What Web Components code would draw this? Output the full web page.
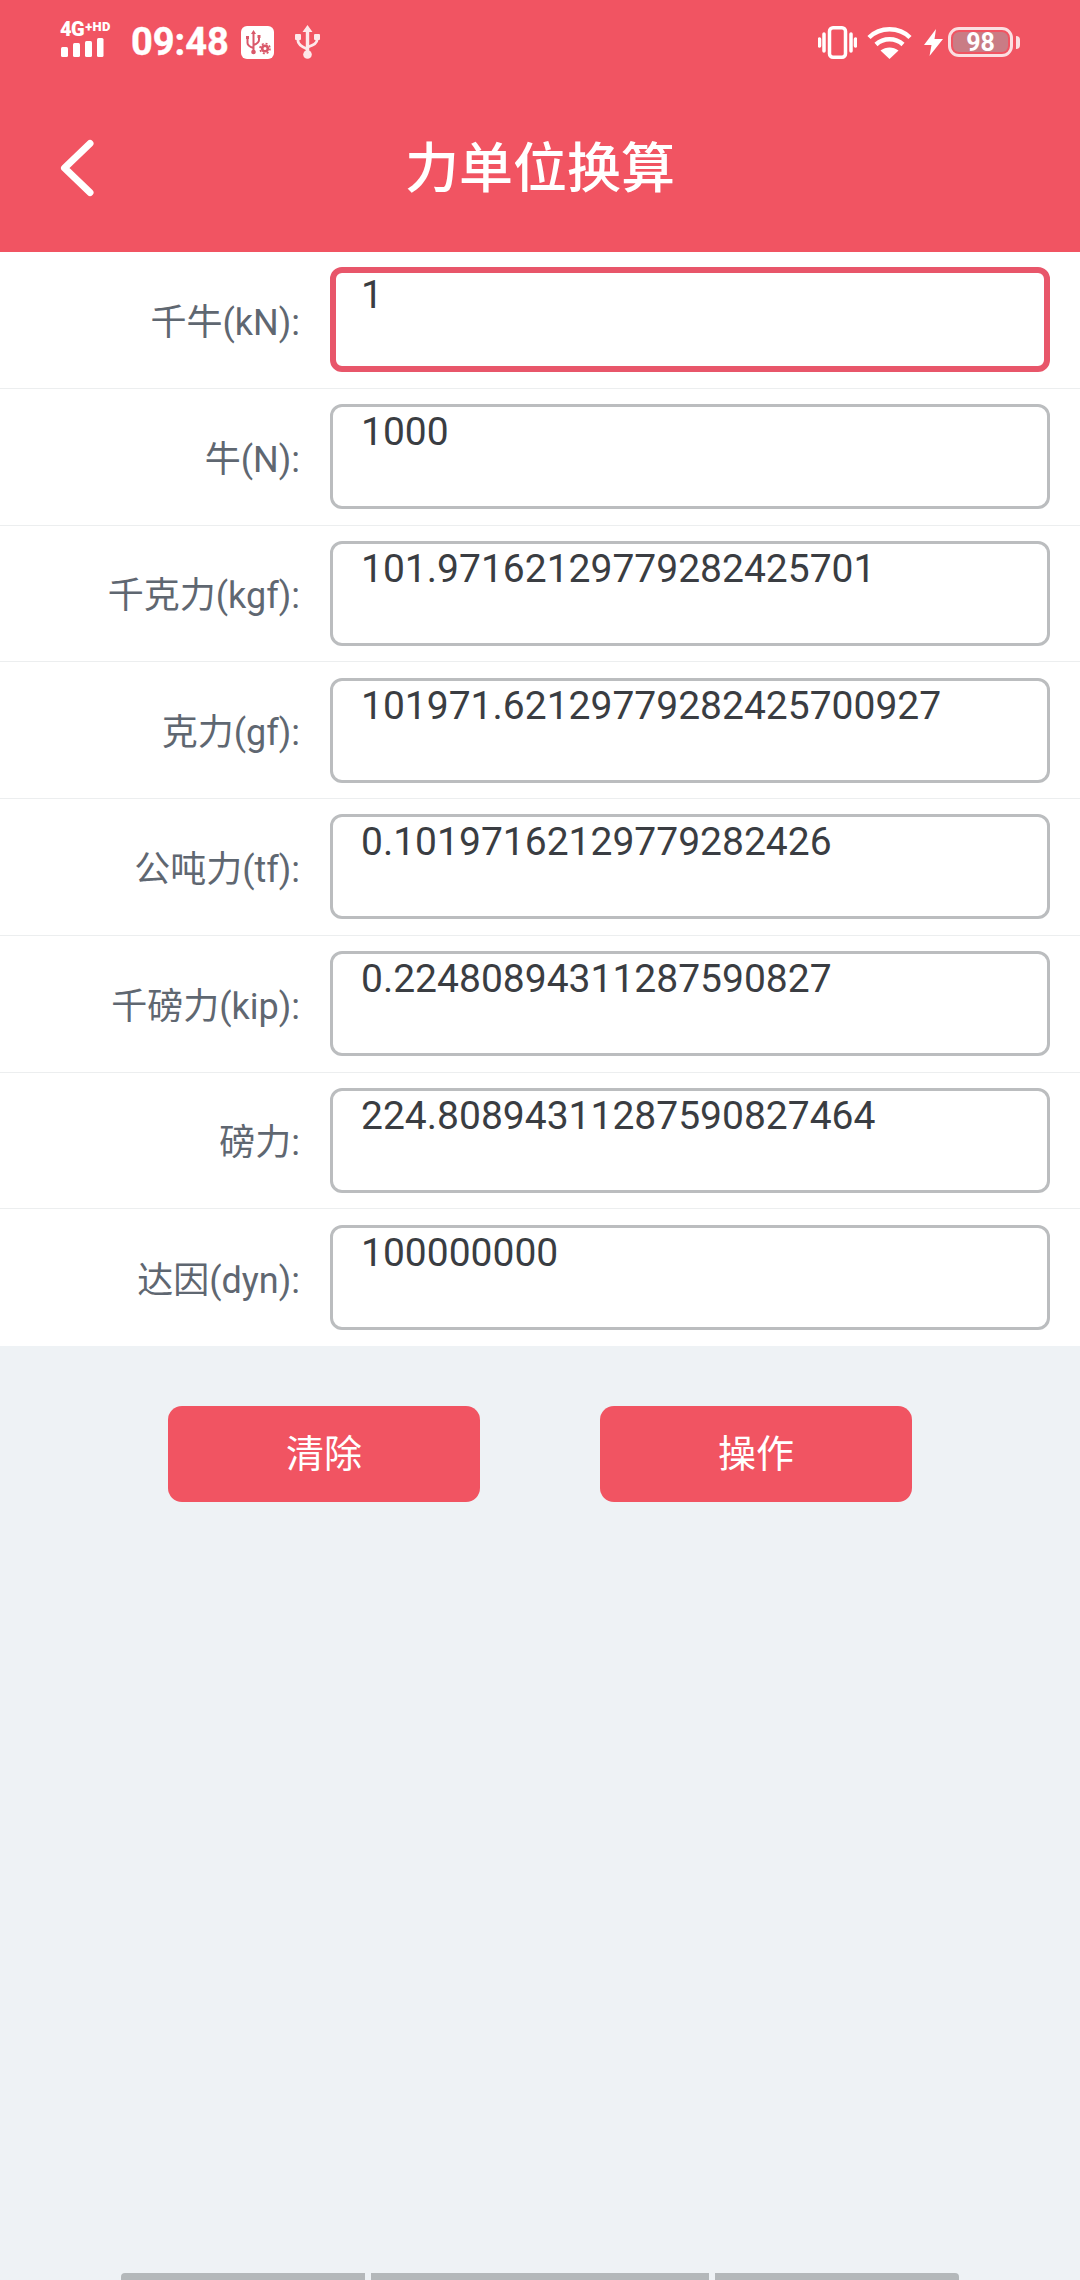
<!DOCTYPE html>
<html lang="zh">
<head>
<meta charset="utf-8">
<title>力单位换算</title>
<style>
    html, body { margin: 0; padding: 0; height: 2280px; overflow: hidden; }
    body { font-family: Roboto, "Noto Sans CJK SC", sans-serif; background: #eef2f5; }
</style>
</head>
<body>
<force-page>
    <status-bar></status-bar>
    <title-bar>力单位换算</title-bar>
    <form-list>
        <unit-row label="千牛(kN):" focused>1</unit-row>
        <unit-row label="牛(N):">1000</unit-row>
        <unit-row label="千克力(kgf):">101.97162129779282425701</unit-row>
        <unit-row label="克力(gf):">101971.62129779282425700927</unit-row>
        <unit-row label="公吨力(tf):">0.10197162129779282426</unit-row>
        <unit-row label="千磅力(kip):">0.22480894311287590827</unit-row>
        <unit-row label="磅力:">224.80894311287590827464</unit-row>
        <unit-row label="达因(dyn):">100000000</unit-row>
    </form-list>
    <action-bar>
        <action-button>清除</action-button>
        <action-button>操作</action-button>
    </action-bar>
    <gesture-bar></gesture-bar>
</force-page>

<script>
    class ForcePage extends HTMLElement {
        constructor() {
            super();
            this.attachShadow({ mode: 'open' });
            this.shadowRoot.innerHTML = `
                <style>
                    :host { display: flex; flex-direction: column; height: 2280px; background: #eef2f5; }
                </style>
                <slot></slot>`;
        }
    }
    window.customElements.define('force-page', ForcePage);

    class StatusBar extends HTMLElement {
        constructor() {
            super();
            this.attachShadow({ mode: 'open' });
            this.shadowRoot.innerHTML = `
                <style>
                    :host {
                        display: flex; align-items: center; height: 84px; box-sizing: border-box;
                        padding: 0 60px; background: #f15462; color: #fff;
                        font-family: Roboto, sans-serif;
                    }
                    .side { display: flex; align-items: center; }
                    .spacer { flex: 1; }
                    svg { display: block; }
                    .net { display: flex; flex-direction: column; gap: 1px; width: 58px; height: 35px; margin-top: -5px; }
                    .net span { display: flex; align-items: flex-start; height: 15px; font-size: 20px; font-weight: 900; line-height: 15px; white-space: nowrap; letter-spacing: -.5px; }
                    .net b { font-size: 13px; font-weight: 900; line-height: 10px; letter-spacing: .3px; margin-left: 1px; }
                    .time { font-size: 38px; font-weight: 700; line-height: 40px; margin-left: 13px; width: 97px; -webkit-text-stroke: .4px #fff; }
                    .usbset { margin-left: 13px; }
                    .usb { margin-left: 21px; }
                    .wifi { margin-left: 10px; }
                    .bolt { margin-left: 12px; }
                    .battery {
                        display: flex; align-items: center; justify-content: center;
                        width: 65px; height: 30px; box-sizing: border-box; margin-left: 5px; padding: 2px;
                        border: 3px solid #fbdfe2; border-radius: 11px;
                        background: #c97c85; background-clip: content-box;
                        font-size: 25px; font-weight: 700;
                    }
                    .cap { width: 4px; height: 13px; background: #fbdfe2; border-radius: 0 4px 4px 0; margin-left: 3px; }
                </style>
                <div class="side">
                    <div class="net">
                        <span>4G<b>+HD</b></span>
                        <svg width="44" height="19" viewBox="0 0 44 19" fill="#fff">
                            <rect x="1" y="9" width="7" height="10" rx="1.500"/>
                            <rect x="13" y="5" width="7" height="14" rx="1.500"/>
                            <rect x="25" y="3" width="7" height="16" rx="1.500"/>
                            <rect x="37" y="0" width="6.500" height="19" rx="1.500"/>
                        </svg>
                    </div>
                    <div class="time">09:48</div>
                    <svg class="usbset" width="33" height="33" viewBox="0 0 33 33">
                        <rect width="33" height="33" rx="6" fill="#fff"/>
                        <g fill="none" stroke="#d9586a" stroke-width="2">
                            <path d="M12.500 7v18M6.500 12v5q0 3 6 5M18 11v3q0 3-5.500 5"/>
                        </g>
                        <path d="M12.500 4l2.500 4h-5z" fill="#d9586a"/>
                        <circle cx="12.500" cy="26" r="2.300" fill="#d9586a"/>
                        <rect x="5" y="10" width="3" height="3" fill="#d9586a"/>
                        <rect x="16.500" y="9" width="3" height="3" fill="#d9586a"/>
                        <circle cx="24" cy="22.500" r="2.800" fill="none" stroke="#d9586a" stroke-width="2.600"/>
                        <circle cx="24" cy="22.500" r="5" fill="none" stroke="#d9586a" stroke-width="1.600" stroke-dasharray="2 1.930"/>
                    </svg>
                    <svg class="usb" width="25" height="34" viewBox="0 0 25 34" fill="#fde8ea">
                        <path d="M12.500 0l5 7h-3.300v20h-3.400V7H7.500z"/>
                        <circle cx="12.500" cy="29.500" r="4.300"/>
                        <path d="M3 13v3q0 4 9 8M22 13v2q0 4-9 7" fill="none" stroke="#fde8ea" stroke-width="2.800"/>
                        <rect x="0" y="9" width="6" height="6" rx="1"/>
                        <rect x="19" y="9" width="6" height="6" rx="1"/>
                    </svg>
                </div>
                <div class="spacer"></div>
                <div class="side">
                    <svg width="39" height="33" viewBox="0 0 39 33" fill="none" stroke="#fff" stroke-width="3.500" stroke-linecap="round">
                        <rect x="11.500" y="1.800" width="16" height="29.400" rx="3.500"/>
                        <path d="M6 8v17M33 8v17"/>
                        <path d="M1.500 13v7M37.500 13v7"/>
                    </svg>
                    <svg class="wifi" width="45" height="33" viewBox="0 0 45 33" fill="none" stroke="#fff" stroke-width="4.500">
                        <path d="M2 11.500C13 .5 32 .5 43 11.500"/>
                        <path d="M9 18.500C16.500 11.500 28.500 11.500 36 18.500"/>
                        <path d="M13.500 24.500C19 20.500 26 20.500 31.500 24.500L22.500 33z" fill="#fff" stroke="none"/>
                    </svg>
                    <svg class="bolt" width="19" height="27" viewBox="0 0 19 27" fill="#fff">
                        <path d="M12 0L0 16h7.500L5.500 27 19 10h-8.500z"/>
                    </svg>
                    <div class="battery">98</div>
                    <div class="cap"></div>
                </div>`;
        }
    }
    window.customElements.define('status-bar', StatusBar);

    class TitleBar extends HTMLElement {
        constructor() {
            super();
            this.attachShadow({ mode: 'open' });
            this.shadowRoot.innerHTML = `
                <style>
                    :host {
                        display: flex; align-items: center; justify-content: center; position: relative;
                        height: 168px; box-sizing: border-box; padding-top: 4px;
                        background: #f15462; color: #fff;
                        font: 500 54px/1 Roboto, "Noto Sans CJK SC", sans-serif;
                    }
                    svg { position: absolute; left: 58px; top: 52px; }
                </style>
                <svg width="40" height="64" viewBox="0 0 40 64" fill="none" stroke="#fff" stroke-width="7" stroke-linecap="round" stroke-linejoin="round">
                    <path d="M32 7.500L6.500 32 32 56.500"/>
                </svg>
                <slot></slot>`;
        }
    }
    window.customElements.define('title-bar', TitleBar);

    class FormList extends HTMLElement {
        constructor() {
            super();
            this.attachShadow({ mode: 'open' });
            this.shadowRoot.innerHTML = `
                <style>
                    :host { display: block; background: #fff; }
                </style>
                <slot></slot>`;
        }
    }
    window.customElements.define('form-list', FormList);

    class UnitRow extends HTMLElement {
        constructor() {
            super();
            this.attachShadow({ mode: 'open' });
            this.shadowRoot.innerHTML = `
                <style>
                    :host {
                        display: flex; align-items: center; height: 136.750px; box-sizing: border-box;
                        padding-right: 30px; border-bottom: 1.500px solid #eceeef;
                        font-family: Roboto, "Noto Sans CJK SC", sans-serif;
                    }
                    :host(:last-child) { border-bottom: 0; }
                    label {
                        width: 300px; flex: none; text-align: right; white-space: nowrap;
                        font-size: 36px; line-height: 40px; color: #5f6771; margin-top: 6px;
                    }
                    .box {
                        flex: 1; margin-left: 30px; height: 105px; box-sizing: border-box;
                        padding: 0 0 0 28px; border: 3px solid #bbbdbf; border-radius: 12px;
                        background: #fff; color: #3a3d42; font-size: 39px; line-height: 50px;
                        white-space: nowrap; overflow: hidden;
                    }
                    :host([focused]) .box { border: 6px solid #e8566a; padding-left: 25px; line-height: 44px; }
                </style>
                <label></label>
                <div class="box"><slot></slot></div>`;
            this.shadowRoot.querySelector('label').textContent = this.getAttribute('label');
        }
    }
    window.customElements.define('unit-row', UnitRow);

    class ActionBar extends HTMLElement {
        constructor() {
            super();
            this.attachShadow({ mode: 'open' });
            this.shadowRoot.innerHTML = `
                <style>
                    :host { display: flex; justify-content: center; gap: 120px; padding-top: 60px; }
                </style>
                <slot></slot>`;
        }
    }
    window.customElements.define('action-bar', ActionBar);

    class ActionButton extends HTMLElement {
        constructor() {
            super();
            this.attachShadow({ mode: 'open' });
            this.shadowRoot.innerHTML = `
                <style>
                    :host {
                        display: flex; align-items: center; justify-content: center;
                        width: 312px; height: 96px; border-radius: 14px;
                        background: #f15462; color: #fff;
                        font: 400 38px/1 Roboto, "Noto Sans CJK SC", sans-serif;
                    }
                </style>
                <slot></slot>`;
        }
    }
    window.customElements.define('action-button', ActionButton);

    class GestureBar extends HTMLElement {
        constructor() {
            super();
            this.attachShadow({ mode: 'open' });
            this.shadowRoot.innerHTML = `
                <style>
                    :host { display: flex; justify-content: center; gap: 6px; margin-top: auto; height: 7px; }
                    i { display: block; height: 7px; background: #b4b8ba; }
                    .a { width: 244px; border-radius: 4px 0 0 0; }
                    .b { width: 338px; }
                    .c { width: 244px; border-radius: 0 4px 0 0; }
                </style>
                <i class="a"></i><i class="b"></i><i class="c"></i>`;
        }
    }
    window.customElements.define('gesture-bar', GestureBar);
</script>
</body>
</html>
